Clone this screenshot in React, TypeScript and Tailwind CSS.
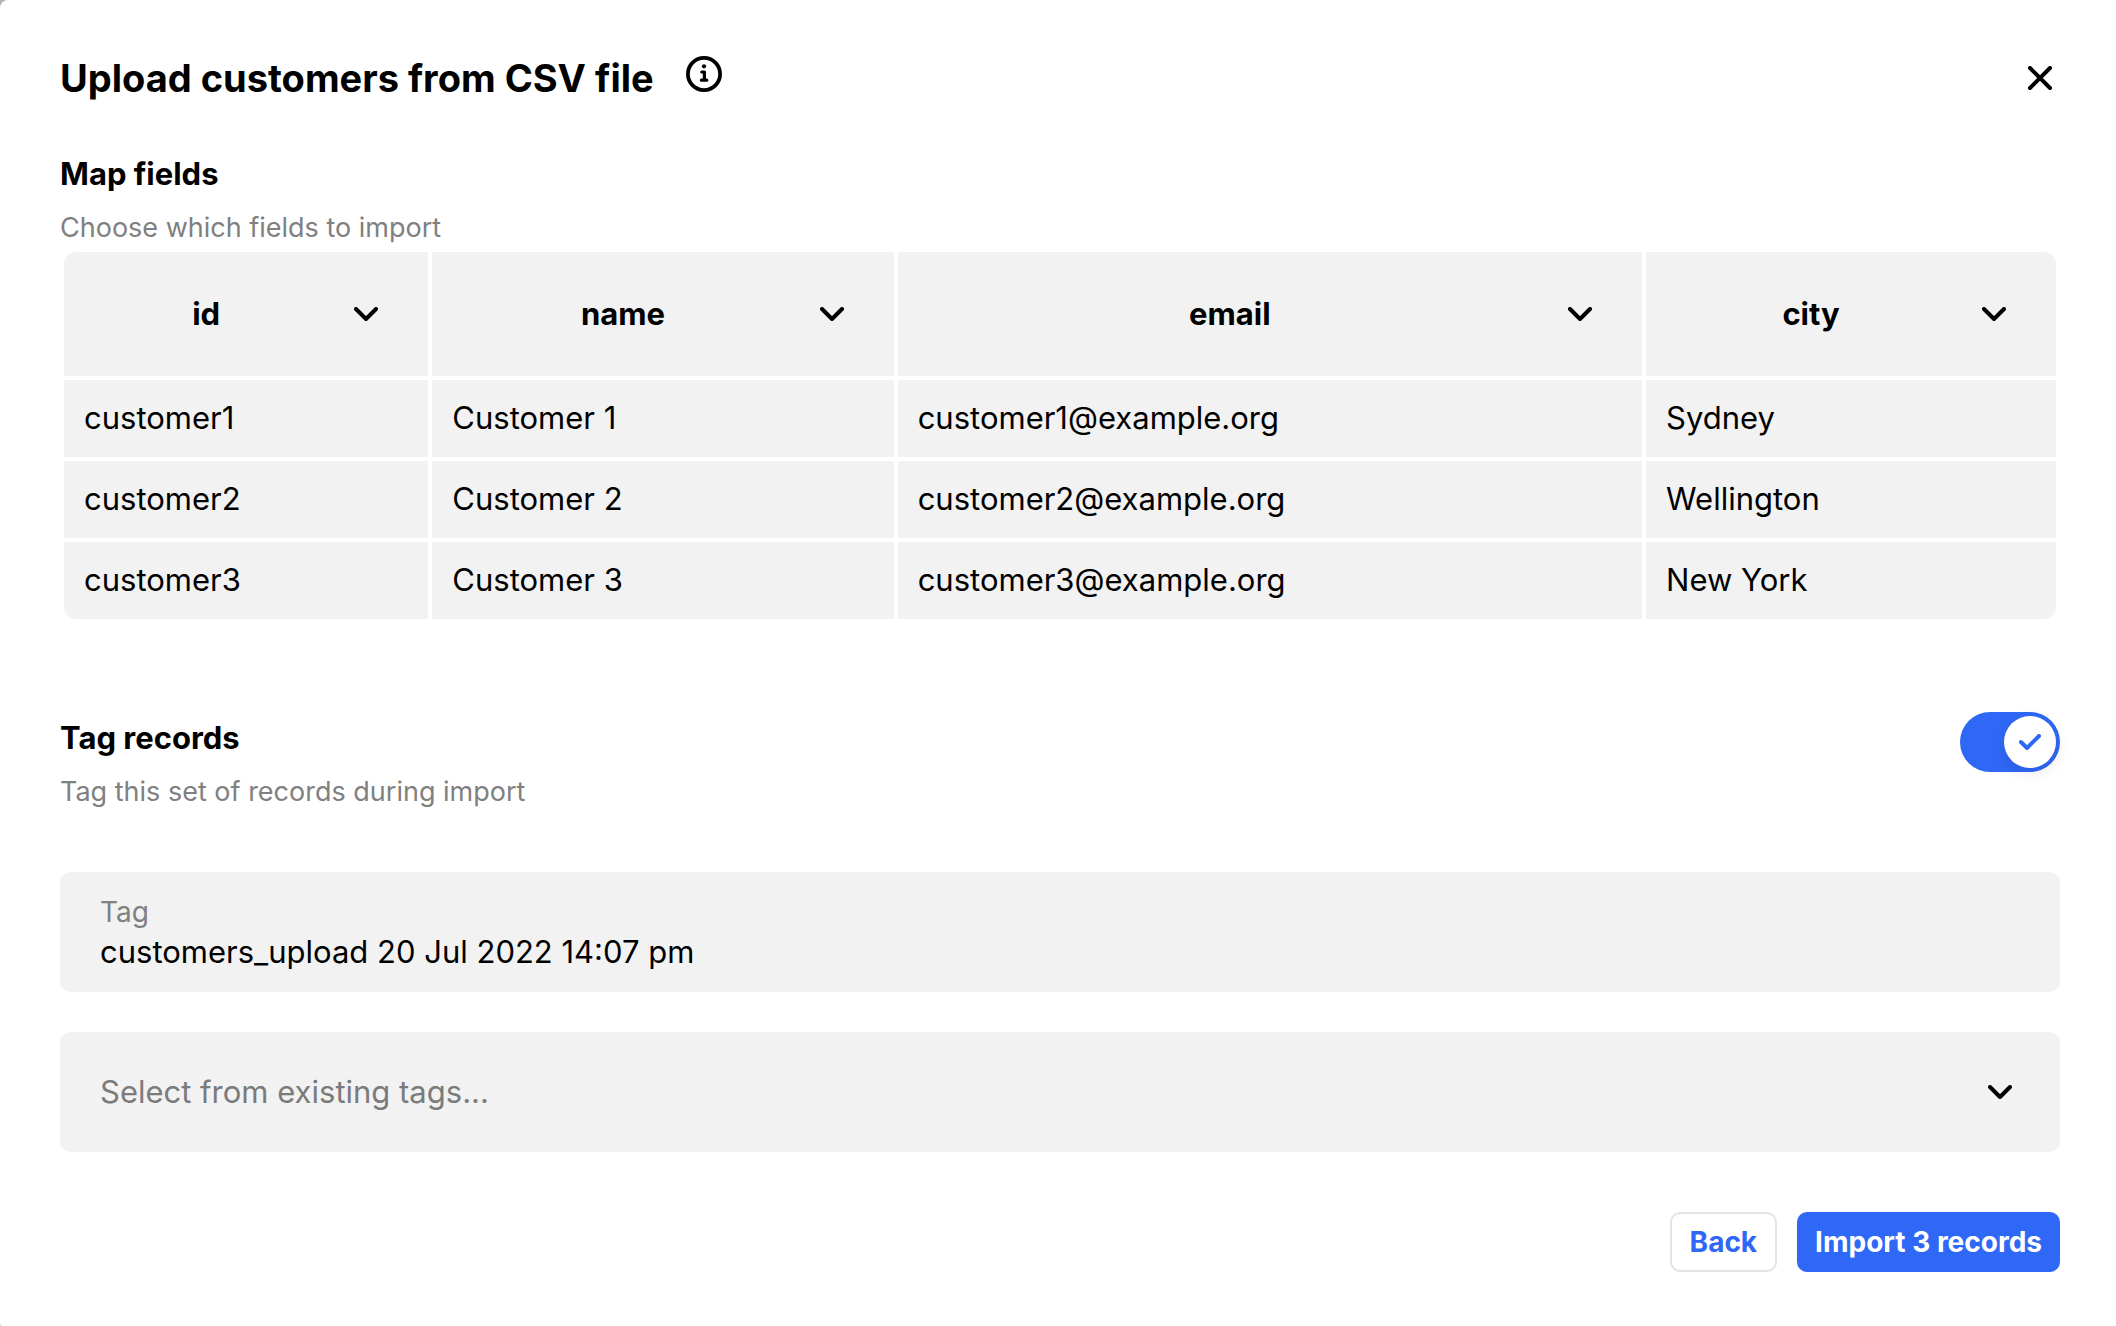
import { useState } from "react";

type Customer = {
  id: string;
  name: string;
  email: string;
  city: string;
};

const fields: Array<{ key: keyof Customer; width: string }> = [
  { key: "id", width: "w-[18.4%]" },
  { key: "name", width: "w-[23.3%]" },
  { key: "email", width: "w-[37.6%]" },
  { key: "city", width: "w-[20.7%]" },
];

const customers: Customer[] = [
  { id: "customer1", name: "Customer 1", email: "customer1@example.org", city: "Sydney" },
  { id: "customer2", name: "Customer 2", email: "customer2@example.org", city: "Wellington" },
  { id: "customer3", name: "Customer 3", email: "customer3@example.org", city: "New York" },
];

function ChevronIcon() {
  return (
    <svg viewBox="0 0 24 14" className="h-[14px] w-6" fill="none" aria-hidden="true">
      <path
        d="M2 2l10 10L22 2"
        stroke="currentColor"
        strokeWidth="4"
        strokeLinecap="round"
        strokeLinejoin="round"
      />
    </svg>
  );
}

function InfoIcon() {
  return (
    <svg viewBox="0 0 36 36" className="h-9 w-9" fill="none" aria-hidden="true">
      <circle cx="18" cy="18" r="16.1" stroke="currentColor" strokeWidth="3.8" />
      <circle cx="18" cy="10.3" r="2.1" fill="currentColor" />
      <path
        d="M15.8 16h2.6v8.2M15.4 24.2h5.4"
        stroke="currentColor"
        strokeWidth="3.2"
        strokeLinecap="round"
        strokeLinejoin="round"
      />
    </svg>
  );
}

function CloseIcon() {
  return (
    <svg viewBox="0 0 24 24" className="h-6 w-6" fill="none" aria-hidden="true">
      <path d="M2 2l20 20M22 2L2 22" stroke="currentColor" strokeWidth="4" strokeLinecap="round" />
    </svg>
  );
}

function SectionHeading({ title, hint }: { title: string; hint: string }) {
  return (
    <div className="pb-0.5">
      <h2 className="text-[31px] leading-10 font-bold">{title}</h2>
      <p className="mt-4 text-[27px] leading-9 text-[#808080]">{hint}</p>
    </div>
  );
}

export default function App() {
  const [tagRecords, setTagRecords] = useState(true);
  const [tag, setTag] = useState("customers_upload 20 Jul 2022 14:07 pm");

  return (
    <div className="min-h-screen bg-[#b3b3b3] font-['Inter',sans-serif] text-black">
      <main className="min-h-screen rounded-tl-lg rounded-bl-xs bg-white py-[54px] pr-14 pl-[60px]">
        <header className="flex items-start justify-between">
          <div className="flex items-start gap-8">
            <h1 className="text-[38px] leading-12 font-bold">Upload customers from CSV file</h1>
            <button type="button" aria-label="About CSV files" className="pt-0.5">
              <InfoIcon />
            </button>
          </div>
          <button type="button" aria-label="Close" className="grid h-12 w-10 place-items-center">
            <CloseIcon />
          </button>
        </header>

        <section className="mt-[52px]">
          <SectionHeading title="Map fields" hint="Choose which fields to import" />
          <table className="w-full table-fixed border-separate border-spacing-1 text-[31px] leading-10">
            <thead>
              <tr>
                {fields.map((field) => (
                  <th
                    key={field.key}
                    scope="col"
                    className={`${field.width} h-[124px] bg-[#f2f2f2] px-[22px] py-0 font-bold first:rounded-tl-xl last:rounded-tr-xl`}
                  >
                    <div className="flex items-center">
                      <span className="flex-1 text-center">{field.key}</span>
                      <button
                        type="button"
                        aria-haspopup="listbox"
                        aria-label={`Change field ${field.key}`}
                        className="grid h-20 w-20 place-items-center"
                      >
                        <ChevronIcon />
                      </button>
                    </div>
                  </th>
                ))}
              </tr>
            </thead>
            <tbody className="[&>tr:last-child>td:first-child]:rounded-bl-xl [&>tr:last-child>td:last-child]:rounded-br-xl">
              {customers.map((customer) => (
                <tr key={customer.id}>
                  {fields.map((field) => (
                    <td key={field.key} className="h-[77px] bg-[#f2f2f2] px-5 pt-0 pb-0.5">
                      {customer[field.key]}
                    </td>
                  ))}
                </tr>
              ))}
            </tbody>
          </table>
        </section>

        <section className="mt-[89px]">
          <div className="flex items-start justify-between">
            <div className="pt-1.5">
              <SectionHeading title="Tag records" hint="Tag this set of records during import" />
            </div>
            <label className="relative block h-[60px] w-[100px] cursor-pointer">
              <input
                type="checkbox"
                role="switch"
                aria-label="Tag records"
                checked={tagRecords}
                onChange={(e) => setTagRecords(e.target.checked)}
                className="peer block h-full w-full appearance-none rounded-full bg-gray-300 checked:bg-[#2f68f6]"
              />
              <span className="pointer-events-none absolute top-1 left-1 grid h-[52px] w-[52px] place-items-center rounded-full bg-white text-[#2f68f6] shadow-[0_4px_16px_rgba(0,0,0,0.1)] peer-checked:left-11">
                <svg viewBox="0 0 22 16" className="h-4 w-[22px]" fill="none" aria-hidden="true">
                  <path
                    d="M2 8l6 6L20 2"
                    stroke="currentColor"
                    strokeWidth="4"
                    strokeLinecap="round"
                    strokeLinejoin="round"
                  />
                </svg>
              </span>
            </label>
          </div>

          <div className="mt-[60px] grid gap-10">
            <label className="flex h-[120px] flex-col justify-center rounded-[10px] bg-[#f2f2f2] px-10">
              <span className="text-[28px] leading-10 text-[#808080]">Tag</span>
              <input
                type="text"
                value={tag}
                onChange={(e) => setTag(e.target.value)}
                className="h-10 w-full bg-transparent text-[31px] leading-10 outline-none"
              />
            </label>
            <div className="relative">
              <select
                aria-label="Existing tags"
                defaultValue=""
                className="block h-[120px] w-full appearance-none rounded-[10px] bg-[#f2f2f2] px-10 text-[31px] text-[#7b7b7b] outline-none"
              >
                <option value="">Select from existing tags...</option>
              </select>
              <span className="pointer-events-none absolute inset-y-0 right-12 grid place-items-center">
                <ChevronIcon />
              </span>
            </div>
          </div>
        </section>

        <footer className="mt-[60px] flex justify-end gap-5 text-[28px] font-bold">
          <button
            type="button"
            className="h-[60px] rounded-[10px] border-2 border-[#e3e3e3] px-[18px] text-[#2f68f6]"
          >
            Back
          </button>
          <button type="button" className="h-[60px] rounded-[10px] bg-[#2f68f6] px-[18px] text-white">
            Import {customers.length} records
          </button>
        </footer>
      </main>
    </div>
  );
}
